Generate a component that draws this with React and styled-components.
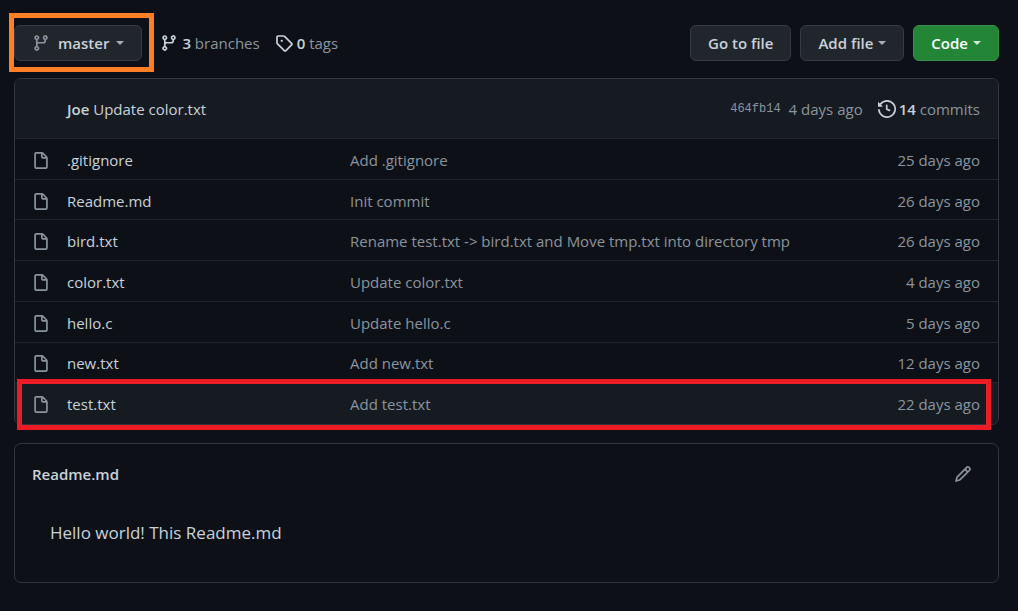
import React from "react";
import styled, { createGlobalStyle, css } from "styled-components";

const GlobalStyle = createGlobalStyle`
  *, *::before, *::after { box-sizing: border-box; }
  html { min-height: 100%; background: #0d1117; }
  body {
    margin: 0;
    background: #0d1117;
    color: #c9d1d9;
    font-family: "Open Sans", "Noto Sans", sans-serif;
    font-size: 15px;
    line-height: 24px;
  }
  a { color: inherit; text-decoration: none; }
  a:hover { color: #58a6ff; }
`;

const Page = styled.main`
  padding: 25px 19px 28px 14px;
`;

const Toolbar = styled.nav`
  display: flex;
  align-items: center;
  height: 36px;
  margin-bottom: 17px;
`;

const Marked = styled.div`
  position: relative;
  margin-right: 18px;
  &::after {
    content: "";
    position: absolute;
    inset: -12px -12px -11px -5px;
    border: 5px solid #ff7f27;
    pointer-events: none;
  }
`;

const Button = styled.button`
  display: flex;
  align-items: center;
  justify-content: center;
  height: 36px;
  padding: 0 17px;
  border: 1px solid ${(p) => (p.$primary ? "#38914a" : "#363b42")};
  border-radius: 6px;
  background: ${(p) => (p.$primary ? "#238636" : "#21262d")};
  color: ${(p) => (p.$primary ? "#ffffff" : "#c9d1d9")};
  font: inherit;
  font-weight: 600;
  white-space: nowrap;
  cursor: pointer;
  svg { margin-right: 8px; color: #8b949e; }
`;

const Caret = styled.span`
  width: 0;
  height: 0;
  margin-left: ${(p) => (p.$wide ? 7 : 5)}px;
  border: 4px solid transparent;
  border-top-color: currentColor;
  border-bottom-width: 0;
  opacity: 0.8;
`;

const Stat = styled.a`
  display: flex;
  align-items: center;
  gap: 4px;
  margin-right: 15px;
  color: #8b949e;
  white-space: nowrap;
  svg { color: #c9d1d9; }
  strong { color: #c9d1d9; font-weight: 600; }
`;

const Actions = styled.div`
  display: flex;
  gap: 9px;
  margin-left: auto;
`;

const panel = css`
  border: 1px solid #30363d;
  border-radius: 7px;
`;

const Files = styled.section`
  ${panel}
  position: relative;
  margin-bottom: 18px;
`;

const LatestCommit = styled.header`
  display: flex;
  align-items: center;
  height: 60px;
  padding: 1px 18px 0 52px;
  border-bottom: 1px solid #21262d;
  border-radius: 6px 6px 0 0;
  background: #161b22;
`;

const Message = styled.div`
  flex: 1;
  strong { font-weight: 600; }
`;

const Hash = styled.a`
  margin-right: 8px;
  color: #8b949e;
  font-family: "Liberation Mono", monospace;
  font-size: 12px;
`;

const Age = styled.span`
  margin-right: 15px;
  color: #8b949e;
`;

const Commits = styled(Stat)`
  gap: 3px;
  margin-right: 0;
`;

const Table = styled.table`
  width: 100%;
  height: 285px;
  border-collapse: separate;
  border-spacing: 0;
  table-layout: fixed;
`;

const Row = styled.tr`
  td { border-bottom: 1px solid #21262d; }
  &:last-child td {
    border-bottom-color: transparent;
    background: #161b22;
  }
  &:last-child td:first-child { border-bottom-left-radius: 6px; }
  &:last-child td:last-child { border-bottom-right-radius: 6px; }
`;

const Cell = styled.td`
  width: ${(p) => p.$width || "auto"};
  padding: 2px 0 0;
  color: ${(p) => (p.$muted ? "#8b949e" : "#c9d1d9")};
  text-align: ${(p) => p.$align || "left"};
  white-space: nowrap;
  overflow: hidden;
  text-overflow: ellipsis;
  &:first-child { padding: 4px 0 0 17px; }
  &:last-child { padding-right: 18px; }
`;

const RowMark = styled.div`
  position: absolute;
  left: 2px;
  right: 7px;
  bottom: -6px;
  height: 51px;
  border: 5px solid #ed1c24;
  pointer-events: none;
`;

const Readme = styled.article`
  ${panel}
  padding: 18px 26px 36px 17px;
`;

const ReadmeHeader = styled.header`
  display: flex;
  align-items: center;
  justify-content: space-between;
  margin-bottom: 34px;
`;

const ReadmeTitle = styled.h2`
  margin: 0;
  font-size: 15px;
  font-weight: 600;
`;

const IconButton = styled.button`
  display: flex;
  padding: 0;
  border: 0;
  background: none;
  color: #8b949e;
  cursor: pointer;
`;

const ReadmeText = styled.p`
  margin: 0 18px;
  font-size: 17px;
  line-height: 26px;
`;

const Glyph = styled.svg`
  display: block;
  flex: none;
  fill: currentColor;
`;

const paths = {
  branch:
    "M11.75 2.5a.75.75 0 100 1.5.75.75 0 000-1.5zm-2.25.75a2.25 2.25 0 113 2.122V6A2.5 2.5 0 0110 8.5H6a1 1 0 00-1 1v1.128a2.251 2.251 0 11-1.5 0V5.372a2.25 2.25 0 111.5 0v1.836A2.492 2.492 0 016 7h4a1 1 0 001-1v-.628A2.25 2.25 0 019.5 3.25zM4.25 12a.75.75 0 100 1.5.75.75 0 000-1.5zM3.5 3.25a.75.75 0 111.5 0 .75.75 0 01-1.5 0z",
  tag: "M2.5 7.775V2.75a.25.25 0 01.25-.25h5.025a.25.25 0 01.177.073l6.25 6.25a.25.25 0 010 .354l-5.025 5.025a.25.25 0 01-.354 0l-6.25-6.25a.25.25 0 01-.073-.177zm-1.5 0V2.75C1 1.784 1.784 1 2.75 1h5.025c.464 0 .91.184 1.238.513l6.25 6.25a1.75 1.75 0 010 2.474l-5.026 5.026a1.75 1.75 0 01-2.474 0l-6.25-6.25A1.75 1.75 0 011 7.775zM6 5a1 1 0 100 2 1 1 0 000-2z",
  file: "M3.75 1.5a.25.25 0 00-.25.25v11.5c0 .138.112.25.25.25h8.5a.25.25 0 00.25-.25V6H9.75A1.75 1.75 0 018 4.25V1.5H3.75zm5.75.56v2.19c0 .138.112.25.25.25h2.19L9.5 2.06zM2 1.75C2 .784 2.784 0 3.75 0h5.086c.464 0 .909.184 1.237.513l3.414 3.414c.329.328.513.773.513 1.237v8.086A1.75 1.75 0 0112.25 15h-8.5A1.75 1.75 0 012 13.25V1.75z",
  history:
    "M1.643 3.143L.427 1.927A.25.25 0 000 2.104V5.75c0 .138.112.25.25.25h3.646a.25.25 0 00.177-.427L2.715 4.215a6.5 6.5 0 11-1.18 4.458.75.75 0 10-1.493.154 8.001 8.001 0 101.6-5.684zM7.75 4a.75.75 0 01.75.75v2.992l2.028.812a.75.75 0 01-.557 1.392l-2.5-1A.75.75 0 017 8.25v-3.5A.75.75 0 017.75 4z",
  pencil:
    "M11.013 1.427a1.75 1.75 0 012.474 0l1.086 1.086a1.75 1.75 0 010 2.474l-8.61 8.61c-.21.21-.47.364-.756.445l-3.251.93a.75.75 0 01-.927-.928l.929-3.25a1.75 1.75 0 01.445-.758l8.61-8.61zm1.414 1.06a.25.25 0 00-.354 0L10.811 3.75l1.439 1.44 1.263-1.263a.25.25 0 000-.354l-1.086-1.086zM11.189 6.25L9.75 4.81l-6.286 6.287a.25.25 0 00-.064.108l-.558 1.953 1.953-.558a.249.249 0 00.108-.064l6.286-6.286z",
};

const Icon = ({ name }) => (
  <Glyph viewBox="0 0 16 16" width="18" height="18" aria-hidden="true">
    <path fillRule="evenodd" d={paths[name]} />
  </Glyph>
);

const files = [
  [".gitignore", "Add .gitignore", "25 days ago"],
  ["Readme.md", "Init commit", "26 days ago"],
  ["bird.txt", "Rename test.txt -> bird.txt and Move tmp.txt into directory tmp", "26 days ago"],
  ["color.txt", "Update color.txt", "4 days ago"],
  ["hello.c", "Update hello.c", "5 days ago"],
  ["new.txt", "Add new.txt", "12 days ago"],
  ["test.txt", "Add test.txt", "22 days ago"],
];

export default function App() {
  return (
    <>
      <GlobalStyle />
      <Page>
        <Toolbar>
          <Marked>
            <Button type="button">
              <Icon name="branch" />
              master
              <Caret $wide />
            </Button>
          </Marked>
          <Stat href="#branches">
            <Icon name="branch" />
            <span><strong>3</strong> branches</span>
          </Stat>
          <Stat href="#tags">
            <Icon name="tag" />
            <span><strong>0</strong> tags</span>
          </Stat>
          <Actions>
            <Button type="button">Go to file</Button>
            <Button type="button">Add file<Caret /></Button>
            <Button type="button" $primary>Code<Caret /></Button>
          </Actions>
        </Toolbar>

        <Files>
          <LatestCommit>
            <Message><strong>Joe</strong> <a href="#commit">Update color.txt</a></Message>
            <Hash href="#commit">464fb14</Hash>
            <Age>4 days ago</Age>
            <Commits href="#commits">
              <Icon name="history" />
              <span><strong>14</strong> commits</span>
            </Commits>
          </LatestCommit>
          <Table>
            <tbody>
              {files.map(([name, message, age]) => (
                <Row key={name}>
                  <Cell $width="52px" $muted><Icon name="file" /></Cell>
                  <Cell $width="283px"><a href={"#" + name}>{name}</a></Cell>
                  <Cell $muted>{message}</Cell>
                  <Cell $width="130px" $align="right" $muted>{age}</Cell>
                </Row>
              ))}
            </tbody>
          </Table>
          <RowMark />
        </Files>

        <Readme>
          <ReadmeHeader>
            <ReadmeTitle>Readme.md</ReadmeTitle>
            <IconButton type="button" aria-label="Edit file"><Icon name="pencil" /></IconButton>
          </ReadmeHeader>
          <ReadmeText>Hello world! This Readme.md</ReadmeText>
        </Readme>
      </Page>
    </>
  );
}
